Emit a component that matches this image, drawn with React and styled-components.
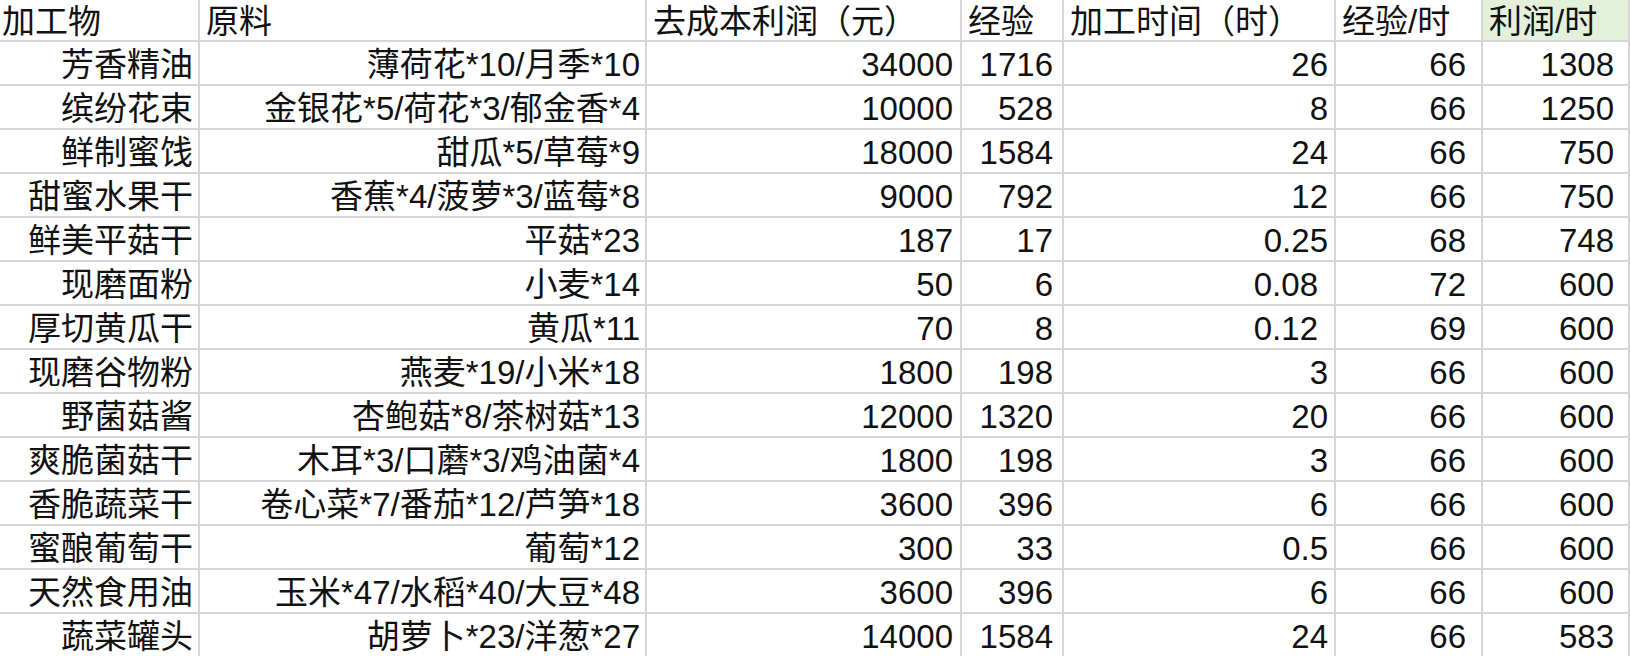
import React from "react";
import styled, { createGlobalStyle } from "styled-components";

const Global = createGlobalStyle`
  html, body { margin: 0; padding: 0; background: #ffffff; }
  body { overflow: hidden; }
`;

const Sheet = styled.div`
  display: grid;
  grid-template-columns: 200px 447px 315px 102px 272px 147px 1fr;
  grid-auto-rows: 44px;
  grid-template-rows: 42px;
  width: 1630px;
  font-family: "Liberation Sans", "Noto Sans CJK SC", sans-serif;
  font-size: 33px;
  color: #111111;
`;

const Cell = styled.div`
  box-sizing: border-box;
  display: flex;
  align-items: center;
  justify-content: ${(p) => (p.$head ? "flex-start" : "flex-end")};
  padding: 3px ${(p) => p.$pr ?? 8}px 0 ${(p) => p.$pl ?? 6}px;
  border-right: 2px solid #d6d6d6;
  border-bottom: 2px solid #d6d6d6;
  background: ${(p) => (p.$green ? "#e3f0da" : "#ffffff")};
  white-space: nowrap;
  overflow: hidden;
  line-height: 1;
`;

const headers = [
  "加工物",
  "原料",
  "去成本利润（元）",
  "经验",
  "加工时间（时）",
  "经验/时",
  "利润/时",
];

const rightPad = [5, 5, 7, 9, 6, 15, 14];

const rows = [
  ["芳香精油", "薄荷花*10/月季*10", "34000", "1716", "26", "66", "1308"],
  ["缤纷花束", "金银花*5/荷花*3/郁金香*4", "10000", "528", "8", "66", "1250"],
  ["鲜制蜜饯", "甜瓜*5/草莓*9", "18000", "1584", "24", "66", "750"],
  ["甜蜜水果干", "香蕉*4/菠萝*3/蓝莓*8", "9000", "792", "12", "66", "750"],
  ["鲜美平菇干", "平菇*23", "187", "17", "0.25", "68", "748"],
  ["现磨面粉", "小麦*14", "50", "6", "0.08", "72", "600"],
  ["厚切黄瓜干", "黄瓜*11", "70", "8", "0.12", "69", "600"],
  ["现磨谷物粉", "燕麦*19/小米*18", "1800", "198", "3", "66", "600"],
  ["野菌菇酱", "杏鲍菇*8/茶树菇*13", "12000", "1320", "20", "66", "600"],
  ["爽脆菌菇干", "木耳*3/口蘑*3/鸡油菌*4", "1800", "198", "3", "66", "600"],
  ["香脆蔬菜干", "卷心菜*7/番茄*12/芦笋*18", "3600", "396", "6", "66", "600"],
  ["蜜酿葡萄干", "葡萄*12", "300", "33", "0.5", "66", "600"],
  ["天然食用油", "玉米*47/水稻*40/大豆*48", "3600", "396", "6", "66", "600"],
  ["蔬菜罐头", "胡萝卜*23/洋葱*27", "14000", "1584", "24", "66", "583"],
];

const shifted = new Set(["0.08", "0.12"]);

export default function App() {
  return (
    <>
      <Global />
      <Sheet>
        {headers.map((h, i) => (
          <Cell key={"h" + i} $head $green={i === 6} $pl={i === 0 ? 2 : 6}>
            {h}
          </Cell>
        ))}
        {rows.map((r, ri) =>
          r.map((v, ci) => (
            <Cell
              key={ri + "-" + ci}
              $pr={rightPad[ci] + (ci === 4 && shifted.has(v) ? 10 : 0)}
            >
              {v}
            </Cell>
          ))
        )}
      </Sheet>
    </>
  );
}
